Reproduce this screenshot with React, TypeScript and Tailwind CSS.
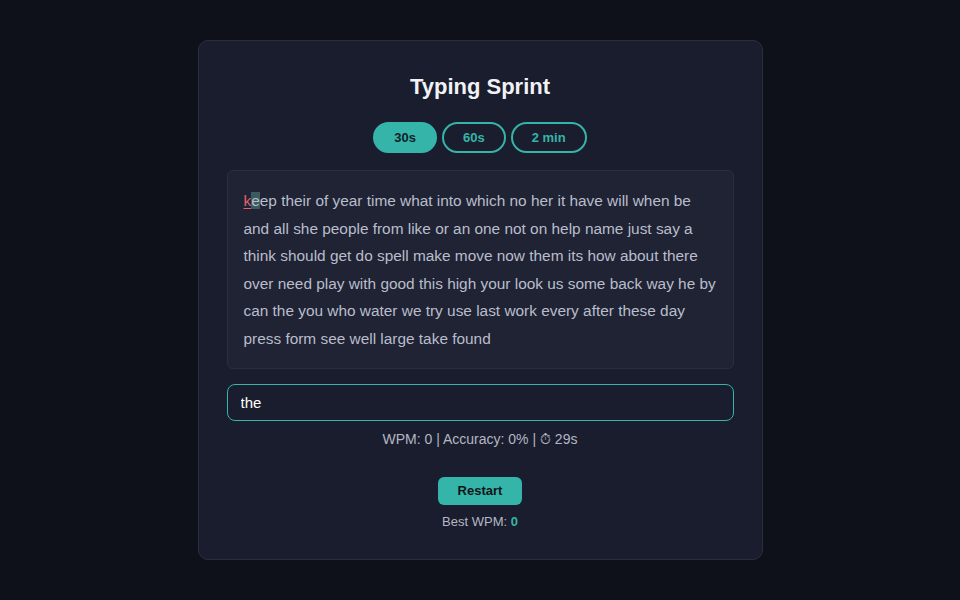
import { useState } from 'react';

const WORDS =
  'keep their of year time what into which no her it have will when be and all she people from like or an one not on help name just say a think should get do spell make move now them its how about there over need play with good this high your look us some back way he by can the you who water we try use last work every after these day press form see well large take found';

const DURATIONS = ['30s', '60s', '2 min'];

export default function App() {
  const [active, setActive] = useState(0);
  const [typed, setTyped] = useState('the');

  return (
    <div
      className="min-h-screen w-full bg-[#0f111a] flex items-center justify-center"
      style={{ fontFamily: '"Liberation Sans", Arial, sans-serif' }}
    >
      <div className="w-[565px] rounded-[10px] border border-[#2a2e3f] bg-[#1a1d2d] px-[28px] pt-[28px] pb-[28px] flex flex-col items-center">
        <h1 className="text-[22px] leading-[36px] font-bold text-[#f1f2f6]">Typing Sprint</h1>

        <div className="mt-[17px] flex gap-[5px]">
          {DURATIONS.map((d, i) => (
            <button
              key={d}
              onClick={() => setActive(i)}
              className={
                i === active
                  ? 'h-[31px] px-[19px] rounded-full border-2 border-[#35b4a9] bg-[#35b4a9] text-[13px] font-bold text-[#14202a]'
                  : 'h-[31px] px-[19px] rounded-full border-2 border-[#35b4a9] bg-transparent text-[13px] font-bold text-[#35b4a9]'
              }
            >
              {d}
            </button>
          ))}
        </div>

        {/* Passage */}
        <div className="mt-[17px] w-full rounded-md border border-[#2a2f40] bg-[#1f2334] px-[16px] py-[16px] text-[15.4px] leading-[27.5px] text-[#b9bdcb]">
          <span className="text-[#e5606a] underline underline-offset-2">k</span>
          <span className="bg-[#3a5c60]">e</span>
          {WORDS.slice(2)}
        </div>

        <input
          value={typed}
          onChange={(e) => setTyped(e.target.value)}
          className="mt-[15px] h-[37px] w-full rounded-lg border border-[#35b4a9] bg-[#1a1d2d] px-[13px] text-[15px] text-white outline-none"
        />

        <div className="mt-[8px] text-[14px] leading-[20px] text-[#b3b7c4]">
          WPM: 0 | Accuracy: 0% | ⏱ 29s
        </div>

        <button className="mt-[28px] h-[28px] w-[84px] rounded-md bg-[#35b4a9] text-[13px] font-bold text-[#101418]">
          Restart
        </button>

        <div className="mt-[8px] text-[13px] leading-[18px] text-[#b3b7c4]">
          Best WPM: <span className="font-bold text-[#35b4a9]">0</span>
        </div>
      </div>
    </div>
  );
}
